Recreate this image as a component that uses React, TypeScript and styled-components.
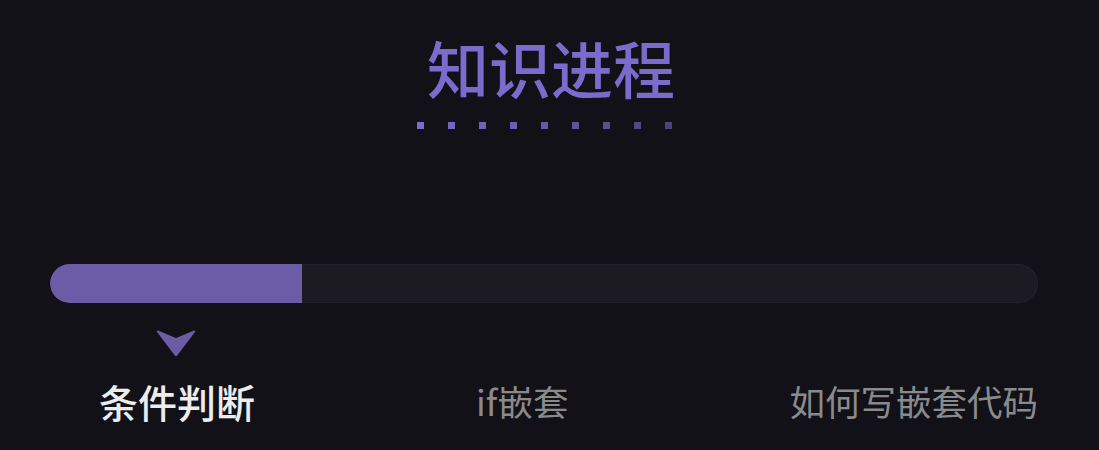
import React from "react";
import styled, { createGlobalStyle } from "styled-components";

const Global = createGlobalStyle`
  html, body {
    margin: 0;
    padding: 0;
    background: #121117;
    width: 1099px;
    height: 450px;
    overflow: hidden;
    font-family: "Noto Sans CJK SC", "Noto Sans", sans-serif;
  }
`;

const Page = styled.div`
  width: 988px;
  margin-left: 50px;
  display: flex;
  flex-direction: column;
  align-items: stretch;
`;

const Header = styled.header`
  display: flex;
  flex-direction: column;
  align-items: center;
  padding-top: 22px;
`;

const Title = styled.h1`
  margin: 0;
  padding-left: 14px;
  font-size: 62px;
  line-height: 90px;
  font-weight: 500;
  color: #7b6bcc;
  letter-spacing: 0;
`;

const Dots = styled.div`
  display: flex;
  gap: 24px;
  margin-top: 10px;
`;

const Dot = styled.span<{ $alpha: number }>`
  width: 7px;
  height: 7px;
  background: #7b6bcc;
  opacity: ${(p) => p.$alpha};
`;

const Track = styled.div`
  margin-top: 135px;
  height: 39px;
  border-radius: 20px;
  background: #1c1b21;
  box-shadow: inset 0 0 0 1px #1f222b;
  overflow: hidden;
  display: flex;
`;

const Fill = styled.div`
  height: 100%;
  background: #6b5ca8;
  border-radius: 20px 0 0 20px;
`;

const Marker = styled.div`
  width: 252px;
  display: flex;
  justify-content: center;
  margin-top: 27px;
  height: 28px;
`;

const Labels = styled.div`
  display: flex;
  justify-content: space-between;
  align-items: center;
  padding-left: 49px;
  padding-right: 0;
  margin-top: 18px;
`;

const Label = styled.span<{ $active?: boolean }>`
  font-size: ${(p) => (p.$active ? "39px" : "35.5px")};
  font-weight: ${(p) => (p.$active ? 500 : 400)};
  color: ${(p) => (p.$active ? "#ececec" : "#8a8a8d")};
  line-height: 50px;
  white-space: nowrap;
`;

const dotAlphas = [1, 0.95, 0.9, 0.85, 0.8, 0.74, 0.68, 0.62, 0.56];

export default function App() {
  return (
    <>
      <Global />
      <Page>
        <Header>
          <Title>知识进程</Title>
          <Dots>
            {dotAlphas.map((a, i) => (
              <Dot key={i} $alpha={a} />
            ))}
          </Dots>
        </Header>
        <Track>
          <Fill style={{ width: "252px" }} />
        </Track>
        <Marker>
          <svg width="42" height="28" viewBox="0 0 42 28">
            <path
              d="M2 2 Q1 0.5 3 0.5 L21 8 L39 0.5 Q41 0.5 40 2 L22.2 25.5 Q21 27 19.8 25.5 Z"
              fill="#6b5ca8"
            />
          </svg>
        </Marker>
        <Labels>
          <Label $active>条件判断</Label>
          <Label>if嵌套</Label>
          <Label>如何写嵌套代码</Label>
        </Labels>
      </Page>
    </>
  );
}
